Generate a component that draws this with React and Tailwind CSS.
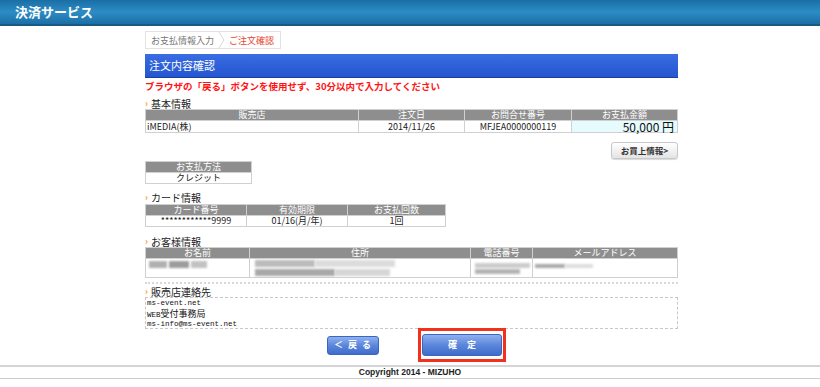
import React from "react";

const jp = { fontFamily: '"MS PGothic", "Noto Sans CJK JP", sans-serif' };

function Heading({ children }) {
  return (
    <div className="flex items-center gap-[3px] h-[11px] text-[10px] leading-[11px] text-[#222]">
      <span className="text-[#f29a1c] text-[9px] font-bold">›</span>
      <span>{children}</span>
    </div>
  );
}

function Blur({ w, h = 7, tone = "#b5b5b5" }) {
  return <div className="blur-[1.2px]" style={{ width: w, height: h, background: tone }} />;
}

const th = "font-normal border border-[#d0d0d0]";
const td = "border border-[#d0d0d0]";

export default function App() {
  return (
    <div className="w-[820px] h-[387px] bg-white flex flex-col overflow-hidden" style={jp}>
      <div className="h-[26px] shrink-0 bg-gradient-to-b from-[#1a6ea5] via-[#2d8cc5] to-[#1c6fa5] border-b-2 border-[#165a85] flex items-center pl-[15px]">
        <span className="text-white text-[13px] font-bold">決済サービス</span>
      </div>

      <div className="w-[533px] ml-[145px] flex flex-col">
        <div className="mt-[5px] self-start flex items-center h-[18px] border border-[#e2e2e2] text-[9px] leading-none">
          <span className="pl-[5px] pr-[4px] text-[#777]">お支払情報入力</span>
          <svg width="7" height="16" viewBox="0 0 7 16" className="shrink-0">
            <path d="M1 0 L6 8 L1 16" fill="none" stroke="#d8d8d8" strokeWidth="1" />
          </svg>
          <span className="pl-[4px] pr-[6px] text-[#e8432a]">ご注文確認</span>
        </div>

        <div className="mt-[5px] h-[24px] bg-gradient-to-b from-[#3a6de2] to-[#2356d0] border-b border-[#1b3f9c] flex items-center pl-[4px] text-white text-[11px]">
          注文内容確認
        </div>

        <div className="mt-[3px] text-[9.5px] leading-[11px] text-[#ff1414] font-bold">
          ブラウザの「戻る」ボタンを使用せず、30分以内で入力してください
        </div>

        <div className="mt-[6px]"><Heading>基本情報</Heading></div>
        <table className="w-full border-collapse text-[9px] leading-[10px]">
          <tbody>
            <tr className="bg-[#8e8e8e] text-white h-[11px]">
              <th className={`${th} w-[213px]`}>販売店</th>
              <th className={`${th} w-[106px]`}>注文日</th>
              <th className={`${th} w-[107px]`}>お問合せ番号</th>
              <th className={th}>お支払金額</th>
            </tr>
            <tr className="h-[12px] text-[#222]">
              <td className={`${td} pl-[1px]`}>iMEDIA(株)</td>
              <td className={`${td} text-center`}>2014/11/26</td>
              <td className={`${td} text-center`}>MFJEA0000000119</td>
              <td className={`${td} bg-[#e6fbfd] text-right pr-[3px] text-[12px] leading-[11px] text-[#111]`}>50,000 円</td>
            </tr>
          </tbody>
        </table>

        <div className="flex justify-end mt-[9px]">
          <div className="w-[67px] h-[17px] rounded-[3px] border border-[#c8c8c8] bg-gradient-to-b from-white to-[#e4e4e4] shadow-[0_1px_1px_rgba(0,0,0,0.15)] flex items-center justify-center text-[8.5px] font-bold text-[#333]">
            お買上情報&gt;
          </div>
        </div>

        <table className="w-[107px] border-collapse text-[9px] leading-[10px] mt-[2px]">
          <tbody>
            <tr className="bg-[#8e8e8e] text-white h-[11px]">
              <th className={th}>お支払方法</th>
            </tr>
            <tr className="h-[11px] text-[#222]">
              <td className={`${td} text-center`}>クレジット</td>
            </tr>
          </tbody>
        </table>

        <div className="mt-[8px]"><Heading>カード情報</Heading></div>
        <table className="w-[301px] border-collapse text-[9px] leading-[10px] mt-[1px]">
          <tbody>
            <tr className="bg-[#8e8e8e] text-white h-[11px]">
              <th className={`${th} w-[101px]`}>カード番号</th>
              <th className={`${th} w-[101px]`}>有効期限</th>
              <th className={th}>お支払回数</th>
            </tr>
            <tr className="h-[11px] text-[#222]">
              <td className={`${td} text-center`}>************9999</td>
              <td className={`${td} text-center`}>01/16(月/年)</td>
              <td className={`${td} text-center`}>1回</td>
            </tr>
          </tbody>
        </table>

        <div className="mt-[9px]"><Heading>お客様情報</Heading></div>
        <table className="w-full border-collapse text-[9px] leading-[10px]">
          <tbody>
            <tr className="bg-[#8e8e8e] text-white h-[11px]">
              <th className={`${th} w-[104px]`}>お名前</th>
              <th className={`${th} w-[221px]`}>住所</th>
              <th className={`${th} w-[62px]`}>電話番号</th>
              <th className={th}>メールアドレス</th>
            </tr>
            <tr className="h-[19px]">
              <td className={`${td} align-top pt-[2px] pl-[3px]`}>
                <div className="flex gap-[2px]">
                  <Blur w={18} h={7} tone="#b0b0b0" />
                  <Blur w={20} h={7} tone="#9c9c9c" />
                  <Blur w={16} h={7} tone="#c2c2c2" />
                </div>
              </td>
              <td className={`${td} align-top pt-[1px] pl-[5px]`}>
                <div className="flex flex-col gap-[2px]">
                  <div className="flex"><Blur w={60} h={7} tone="#bcbcbc" /><Blur w={80} h={7} tone="#dcdcdc" /></div>
                  <div className="flex"><Blur w={80} h={7} tone="#a8a8a8" /><Blur w={55} h={7} tone="#d6d6d6" /></div>
                </div>
              </td>
              <td className={`${td} align-middle pl-[4px]`}>
                <div className="flex flex-col gap-[1px]">
                  <Blur w={55} h={5} tone="#cccccc" />
                  <Blur w={45} h={5} tone="#b4b4b4" />
                </div>
              </td>
              <td className={`${td} align-top pt-[5px] pl-[2px]`}>
                <div className="flex"><Blur w={30} h={4} tone="#aaaaaa" /><Blur w={28} h={4} tone="#dddddd" /></div>
              </td>
            </tr>
          </tbody>
        </table>

        <div className="mt-[4px] border-t-2 border-dotted border-[#d8d8d8]" />
        <div className="mt-[2px]"><Heading>販売店連絡先</Heading></div>
        <div className="h-[32px] border border-dashed border-[#c8c8c8] pl-[1px] pt-[1px] text-[7.5px] leading-[9.5px] text-[#111]" style={{ fontFamily: '"Liberation Mono", "Noto Sans CJK JP", monospace' }}>
          <div>ms-event.net</div>
          <div>WEB<span className="text-[9px]" style={jp}>受付事務局</span></div>
          <div>ms-info@ms-event.net</div>
        </div>

        <div className="flex items-center mt-[-1px]">
          <div className="ml-[182px] w-[52px] h-[19px] rounded-[3px] border border-[#3a66c0] bg-gradient-to-b from-[#8fb0ee] via-[#5c86dc] to-[#3f6ccc] flex items-center justify-center text-white text-[9px] font-bold tracking-[5px] pl-[4px]">
            ＜戻る
          </div>
          <div className="ml-[39px] border-[3px] border-[#f2311c] px-[1px] py-[3px]">
            <div className="w-[80px] h-[22px] rounded-[3px] border border-[#3a66c0] bg-gradient-to-b from-[#8fb0ee] via-[#5c86dc] to-[#3f6ccc] flex items-center justify-center text-white text-[9px] font-bold tracking-[10px] pl-[10px]">
              確定
            </div>
          </div>
        </div>
      </div>

      <div className="mt-[3px] border-t-2 border-[#d4d4d4] border-b border-b-[#cccccc] h-[14px] flex items-center justify-center text-[8.5px] font-bold text-[#222]" style={{ fontFamily: '"Liberation Sans", Arial, sans-serif' }}>
        Copyright 2014 - MIZUHO
      </div>
    </div>
  );
}
